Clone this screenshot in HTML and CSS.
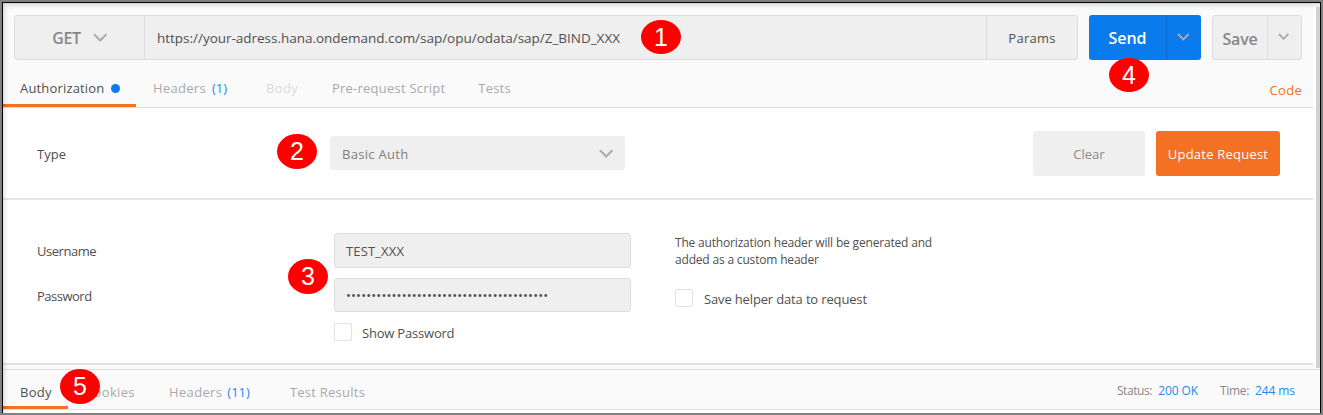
FILE: index.html
```html
<!DOCTYPE html>
<html lang="en">
<head>
<meta charset="utf-8">
<title>API request</title>
<link rel="stylesheet" href="styles.css">
</head>
<body>
<main class="window">
  <div class="request">
    <div class="bar">
      <div class="url-group">
        <div class="method"><span class="t-get">GET</span><svg class="chev" width="15" height="10" viewBox="0 0 15 10"><path d="M1 1.2l6.2 6.3 6.2-6.3"/></svg></div>
        <div class="url"><span class="t-url">https://your-adress.hana.ondemand.com/sap/opu/odata/sap/Z_BIND_XXX</span></div>
        <div class="params"><span class="t-params">Params</span></div>
      </div>
      <div class="send">
        <div class="send-main"><span class="t-send">Send</span></div>
        <div class="send-more"><svg class="chev small" width="13" height="9" viewBox="0 0 13 9"><path d="M1 1l5.3 5.5L11.6 1"/></svg></div>
      </div>
      <div class="save">
        <div class="save-main"><span class="t-save">Save</span></div>
        <div class="save-more"><svg class="chev small" width="12" height="9" viewBox="0 0 12 9"><path d="M1 1l4.7 4.8L10.4 1"/></svg></div>
      </div>
    </div>
    <nav class="tabs">
      <div class="tab active tab-auth"><span class="t-auth">Authorization</span><i class="dot"></i></div>
      <div class="tab"><span class="t-headers">Headers</span><b class="count">(1)</b></div>
      <div class="tab faint"><span class="t-body">Body</span></div>
      <div class="tab tab-pre"><span class="t-pre">Pre-request Script</span></div>
      <div class="tab"><span class="t-tests">Tests</span></div>
      <div class="code"><span class="t-code">Code</span></div>
    </nav>
  </div>
  <section class="type-row">
    <label class="label"><span class="t-type">Type</span></label>
    <div class="select"><span class="t-basic">Basic Auth</span><svg class="chev" width="15" height="10" viewBox="0 0 15 10"><path d="M1 1.2l6.2 6.3 6.2-6.3"/></svg></div>
    <div class="btn clear"><span class="t-clear">Clear</span></div>
    <div class="btn update"><span class="t-update">Update Request</span></div>
  </section>
  <section class="form">
    <div class="labels">
      <label class="label"><span class="t-user">Username</span></label>
      <label class="label"><span class="t-pass">Password</span></label>
    </div>
    <div class="fields">
      <div class="input"><span class="t-test">TEST_XXX</span></div>
      <div class="input password"><span class="t-dots">••••••••••••••••••••••••••••••••••••••••</span></div>
      <div class="check"><i class="box"></i><span class="t-show">Show Password</span></div>
    </div>
    <div class="helper">
      <p class="note"><span class="t-note">The authorization header will be generated and</span><br><span class="t-note">added as a custom header</span></p>
      <div class="check"><i class="box"></i><span class="t-helper">Save helper data to request</span></div>
    </div>
  </section>
  <footer class="response">
    <div class="rtab active"><span class="t-rbody">Body</span></div>
    <div class="rtab cookies"><span class="t-cookies">Cookies</span></div>
    <div class="rtab rheaders"><span class="t-rheaders">Headers</span><b class="count">(11)</b></div>
    <div class="rtab results"><span class="t-results">Test Results</span></div>
    <div class="stats"><span class="t-status">Status:</span><b class="t-ok">200 OK</b><span class="t-time">Time:</span><b class="t-ms">244 ms</b></div>
  </footer>
  <div class="edge"></div>
  <span class="badge b1">1</span>
  <span class="badge b2">2</span>
  <span class="badge b3">3</span>
  <span class="badge b4">4</span>
  <span class="badge b5">5</span>
</main>
</body>
</html>
```
FILE: styles.css
```css
* { box-sizing: border-box; }
body {
  margin: 0;
  width: 1323px;
  height: 415px;
  padding: 2px;
  background: #808080;
  font: 13px/18px "Open Sans", sans-serif;
  color: #505050;
  overflow: hidden;
}
span, b { white-space: nowrap; }
.window {
  position: relative;
  width: 1319px;
  height: 411px;
  border: 1px solid #000;
  border-bottom: 0;
  background: #fff;
}
.window::after {
  content: "";
  position: absolute;
  inset: 0;
  box-shadow: inset 3px 4px 5px -2px rgba(0, 0, 0, .17);
  pointer-events: none;
}
.request {
  width: 1310px;
  height: 105px;
  padding-top: 12px;
  background: #fafafa;
  border-bottom: 1px solid #dedede;
}
.bar { display: flex; height: 45px; padding-left: 11px; }
.bar > div { display: flex; border-radius: 3px; }
.bar > div > div { display: flex; align-items: center; justify-content: center; }
.url-group, .save { background: #efefef; border: 1px solid #dcdcdc; }
.url-group { width: 1064px; }
.method { width: 130px; gap: 12px; padding-left: 1px; border-right: 1px solid #dcdcdc; }
.bar .url { flex: 1; justify-content: flex-start; padding: 0 0 0 12px; }
.params { width: 91px; padding-top: 1px; border-left: 1px solid #dcdcdc; }
.send { width: 112px; margin-left: 11px; background: #097bed; }
.send-main { width: 78px; padding-top: 1px; border-right: 1px solid #0768c9; }
.send-more { flex: 1; }
.save { width: 90px; margin-left: 11px; }
.save-main { width: 55px; padding-top: 2px; border-right: 1px solid #dcdcdc; }
.save-more { flex: 1; }
.chev { fill: none; stroke: #adadad; stroke-width: 2.2; flex: none; }
.chev.small { stroke-width: 1.9; margin: 0 2px 0 0; }
.tabs { display: flex; height: 47px; color: #a9a9a9; }
.tab { display: flex; align-items: center; height: 47px; padding-top: 10px; padding-bottom: 1px; margin-right: 39px; }
.tab-auth { width: 133px; padding-left: 17px; padding-bottom: 0; padding-top: 12px; margin-right: 17px; border-bottom: 3px solid #f47023; }
.active { color: #505050; }
.faint { color: #dcdcdc; margin-right: 34px; }
.tab-pre { margin-right: 33px; }
.dot { width: 9px; height: 9px; margin-left: 7px; border-radius: 50%; background: #097bed; }
.count { margin-left: 5px; font-weight: 400; color: #1f88ee; }
.tabs .count { margin-left: 6px; }
.code { margin-left: auto; padding: 21px 11px 0 0; color: #f47023; }
.type-row {
  display: flex;
  align-items: center;
  width: 1310px;
  height: 92px;
  padding: 0 33px 0 34px;
  border-bottom: 2px solid #e6e6e6;
}
.type-row .label { width: 293px; padding-top: 2px; }
.select {
  display: flex;
  align-items: center;
  justify-content: space-between;
  width: 295px;
  height: 34px;
  padding: 2px 11px 0 12px;
  border-radius: 3px;
  background: #efefef;
  color: #808080;
}
.select .chev { margin-top: -1px; }
.btn {
  display: flex;
  align-items: center;
  justify-content: center;
  height: 45px;
  padding-top: 1px;
  border-radius: 3px;
}
.clear { width: 112px; margin-left: auto; background: #efefef; color: #8b8b8b; }
.update { width: 124px; margin-left: 11px; background: #f47023; color: #fff; }
.form {
  display: flex;
  width: 1310px;
  height: 165px;
  padding: 33px 0 0 34px;
  border-bottom: 2px solid #e2e2e2;
}
.labels { width: 297px; padding-top: 9px; display: flex; flex-direction: column; gap: 27px; }
.fields { width: 297px; }
.input {
  display: flex;
  align-items: center;
  height: 35px;
  margin-bottom: 10px;
  padding-left: 11px;
  border: 1px solid #dedede;
  border-radius: 3px;
  background: #efefef;
}
.password { height: 34px; margin-bottom: 11px; }
.check { display: flex; align-items: center; height: 18px; }
.check span { padding-top: 2px; }
.box { width: 18px; height: 18px; margin-right: 11px; border: 1px solid #e2e2e2; border-radius: 2px; background: #fff; }
.fields .box { margin-right: 10px; }
.helper { margin-left: 44px; }
.note { margin: 0 0 21px; padding-top: 1px; font-size: 12px; line-height: 17px; }
.response {
  display: flex;
  width: 1317px;
  height: 45px;
  padding-top: 4px;
  background: linear-gradient(#dedede, #dedede) 0 4px / 100% 1px no-repeat #fafafa;
  border-bottom: 1px solid #dedede;
  color: #a9a9a9;
}
.rtab { display: flex; align-items: center; padding-top: 5px; }
.rtab.active { width: 65px; padding-left: 17px; border-bottom: 3px solid #f47023; padding-top: 8px; }
.cookies { width: 84px; padding-left: 17px; margin-right: 17px; }
.results { margin-left: 40px; }
.stats { display: flex; align-items: center; margin-left: auto; padding: 4px 25px 0 0; font-size: 12px; color: #888; }
.stats b { margin-left: 6px; font-weight: 400; color: #1f88ee; }
.stats .t-time { margin-left: 22px; }
.edge {
  position: absolute;
  top: 4px;
  right: 0;
  width: 4px;
  height: 361px;
  background: #d2d2d2;
}
.badge {
  position: absolute;
  width: 40px;
  height: 35px;
  border-radius: 50%;
  background: #f00;
  color: #fff;
  font: 25px/35px "Liberation Sans", Arial, sans-serif;
  text-align: center;
}
.b1, .b4 { height: 34px; line-height: 34px; }
.b1 { left: 638px; top: 17px; }
.b2 { left: 274px; top: 131px; }
.b3 { left: 285px; top: 256px; }
.b4 { left: 1106px; top: 55px; }
.b5 { left: 57px; top: 366px; }
.t-get, .t-send, .t-save { font-size: 16px; font-weight: 600; color: #888; }
.t-send { color: #fff; }
.t-get { letter-spacing: -.3px; }
.t-save { letter-spacing: -.2px; }
.t-url { font-size: 13.5px; letter-spacing: -.02px; }
.t-auth { letter-spacing: .17px; }
.t-headers { letter-spacing: .3px; }
.t-body { letter-spacing: .3px; }
.t-pre { letter-spacing: .23px; }
.t-tests { letter-spacing: .2px; }
.t-code { letter-spacing: .3px; }
.t-params { letter-spacing: .25px; }
.t-basic { letter-spacing: .3px; }
.t-update { letter-spacing: .22px; }
.t-user { letter-spacing: -.45px; }
.t-pass { letter-spacing: -.5px; }
.t-show { letter-spacing: -.2px; }
.t-test { letter-spacing: .15px; }
.t-helper { letter-spacing: -.15px; }
.t-note { letter-spacing: -.18px; }
.t-dots { letter-spacing: .17px; }
.t-rbody { letter-spacing: .25px; }
.t-cookies { letter-spacing: .35px; }
.t-rheaders { letter-spacing: .35px; }
.t-results { letter-spacing: .25px; }
.t-status { letter-spacing: -.4px; }
.t-ok, .t-ms { letter-spacing: -.1px; }
.t-time { letter-spacing: -.3px; }
```
